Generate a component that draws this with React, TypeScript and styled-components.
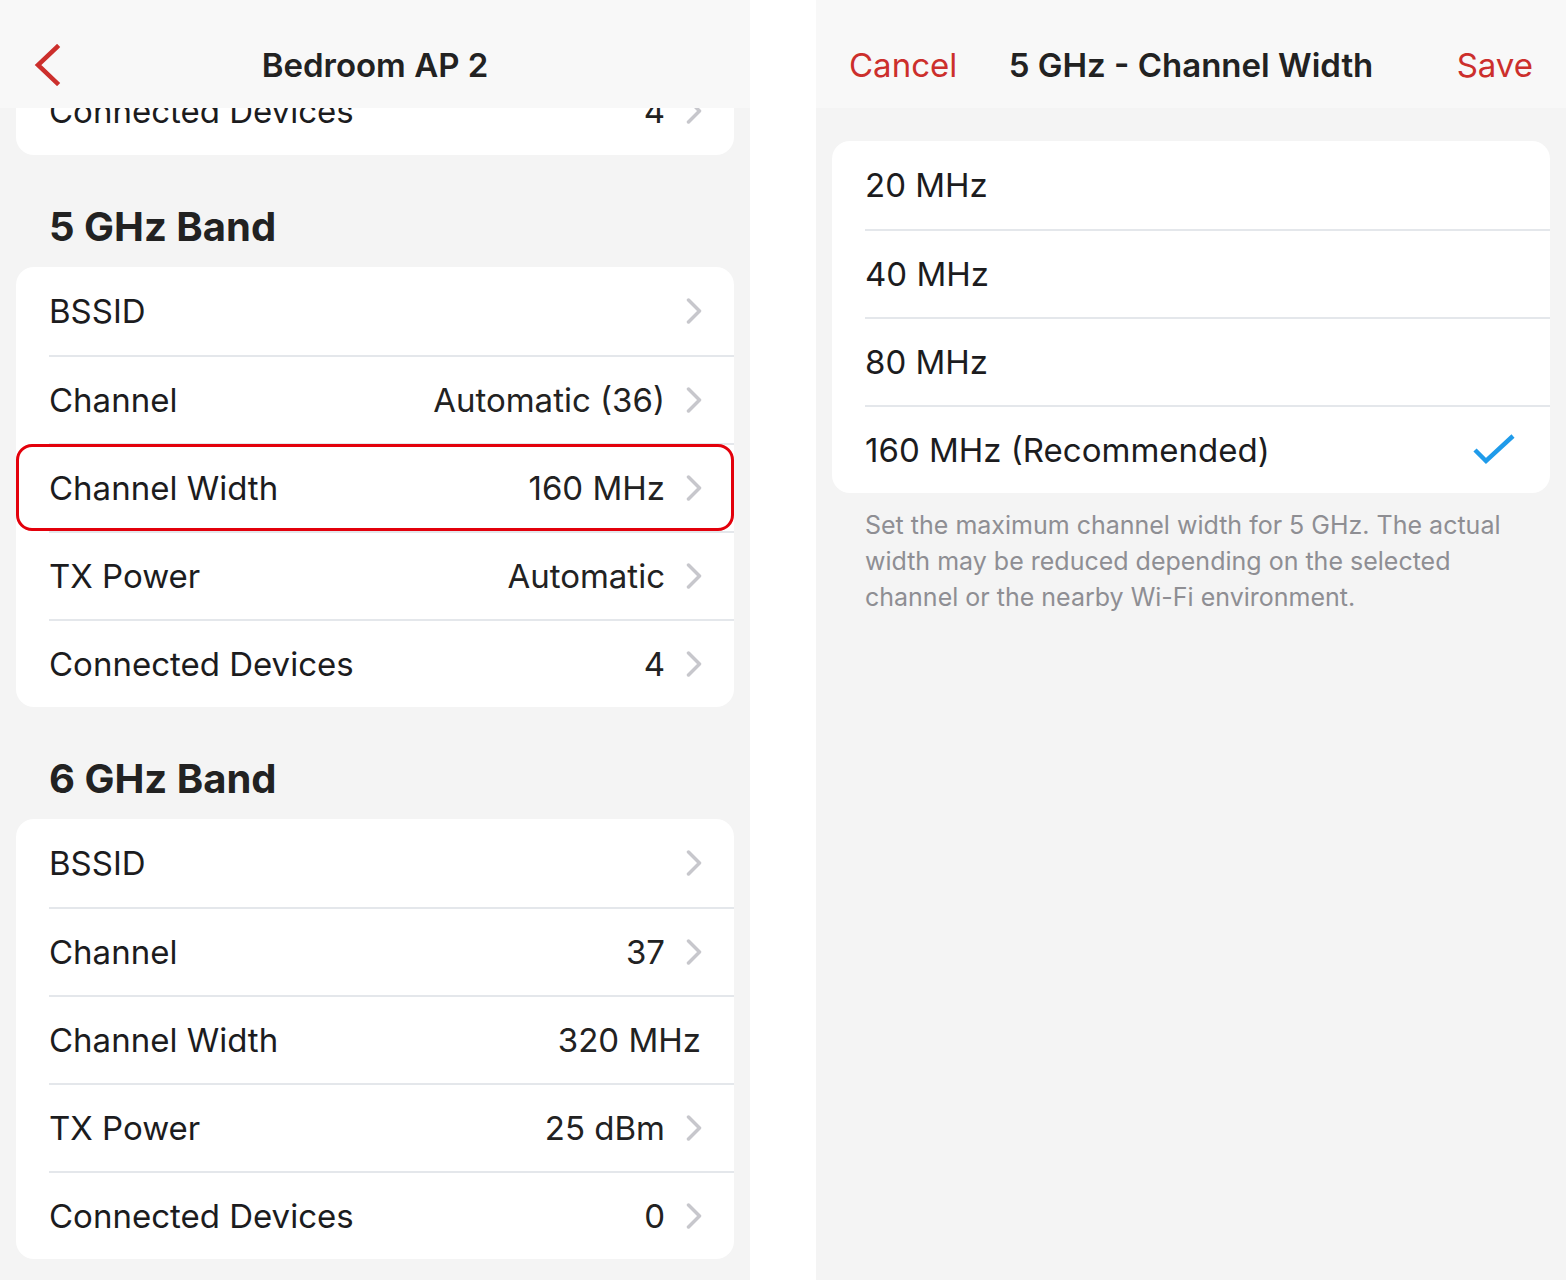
import React from 'react';
import styled, { createGlobalStyle, css } from 'styled-components';

// 类型定义
interface SettingRow {
  label: string;
  value?: string;
  chevron?: boolean;
  highlighted?: boolean;
}

const GlobalStyle = createGlobalStyle`
  html, body {
    margin: 0;
    padding: 0;
    background: #ffffff;
  }
  body {
    font-family: Inter, "Noto Sans", "Liberation Sans", sans-serif;
    color: #1c1c1e;
    -webkit-font-smoothing: antialiased;
  }
`;

const Screen = styled.div`
  display: grid;
  grid-template-columns: 750px 66px 750px;
  height: 1280px;
  background: #ffffff;
`;

const Panel = styled.div`
  display: flex;
  flex-direction: column;
  background: #f4f4f4;
  overflow: hidden;
`;

const NavBar = styled.header`
  flex: 0 0 108px;
  box-sizing: border-box;
  padding: 40px 33px 0;
  background: #f8f8f8;
  position: relative;
  z-index: 2;
`;

const NavInner = styled.div`
  display: grid;
  grid-template-columns: 1fr auto 1fr;
  align-items: center;
  height: 50px;
`;

const NavTitle = styled.h1`
  margin: 0;
  font-size: 33px;
  font-weight: 600;
  color: #222222;
  white-space: nowrap;
`;

const NavAction = styled.button<{ $align: 'left' | 'right' }>`
  justify-self: ${(p) => (p.$align === 'left' ? 'start' : 'end')};
  background: none;
  border: none;
  padding: 0;
  font: inherit;
  font-size: 33px;
  color: #cc2f2c;
  cursor: pointer;
  display: flex;
  align-items: center;
`;

const ScrollArea = styled.div`
  flex: 1;
  overflow: hidden;
  padding: 0 16px;
`;

const Card = styled.div<{ $clipped?: boolean }>`
  background: #ffffff;
  border-radius: 18px;
  overflow: visible;
  ${(p) =>
    p.$clipped &&
    css`
      margin-top: -41px;
    `}
`;

const SectionTitle = styled.h2`
  margin: 0;
  padding: 48px 33px 16px;
  font-size: 40px;
  line-height: 48px;
  font-weight: 700;
  color: #222222;
`;

const Row = styled.div<{ $highlighted?: boolean }>`
  display: flex;
  height: 88px;
  padding-left: 33px;
  border-radius: 16px;
  position: relative;
  ${(p) =>
    p.$highlighted &&
    css`
      &::after {
        content: '';
        position: absolute;
        inset: 1px 0 0 0;
        border: 3px solid #e3000b;
        border-radius: 16px;
        pointer-events: none;
      }
    `}
`;

const RowBody = styled.div<{ $first?: boolean; $pad: number }>`
  flex: 1;
  display: flex;
  align-items: center;
  padding-right: ${(p) => p.$pad}px;
  border-top: ${(p) => (p.$first ? 'none' : '2px solid #e4e7eb')};
`;

const Label = styled.span`
  flex: 1;
  font-size: 33px;
  color: #1c1c1e;
  white-space: nowrap;
`;

const Value = styled.span`
  font-size: 33px;
  color: #222222;
  white-space: nowrap;
`;

const ChevronWrap = styled.span`
  display: flex;
  margin-left: 21px;
`;

const Footer = styled.p`
  margin: 14px 0 0;
  padding: 0 40px 0 33px;
  font-size: 25px;
  line-height: 36px;
  color: #8e8e93;
`;

const RightBody = styled.div`
  flex: 1;
  padding: 33px 16px 0;
`;

const Chevron = () => (
  <ChevronWrap>
    <svg width="16" height="26" viewBox="0 0 16 26" fill="none">
      <path d="M2.5 2 L13.5 13 L2.5 24" stroke="#c7c7cc" strokeWidth="3.5" strokeLinecap="round" strokeLinejoin="round" />
    </svg>
  </ChevronWrap>
);

const BackArrow = () => (
  <svg width="28" height="42" viewBox="0 0 28 42" fill="none">
    <path d="M24 3 L5 21 L24 39" stroke="#cc2f2c" strokeWidth="4.5" strokeLinecap="square" strokeLinejoin="miter" />
  </svg>
);

const CheckMark = () => (
  <svg width="42" height="32" viewBox="0 0 42 32" fill="none">
    <path d="M2 16 L13 27 L40 2" stroke="#1f9bea" strokeWidth="4.5" />
  </svg>
);

const band5: SettingRow[] = [
  { label: 'BSSID', chevron: true },
  { label: 'Channel', value: 'Automatic (36)', chevron: true },
  { label: 'Channel Width', value: '160 MHz', chevron: true, highlighted: true },
  { label: 'TX Power', value: 'Automatic', chevron: true },
  { label: 'Connected Devices', value: '4', chevron: true },
];

const band6: SettingRow[] = [
  { label: 'BSSID', chevron: true },
  { label: 'Channel', value: '37', chevron: true },
  { label: 'Channel Width', value: '320 MHz' },
  { label: 'TX Power', value: '25 dBm', chevron: true },
  { label: 'Connected Devices', value: '0', chevron: true },
];

const widthOptions = ['20 MHz', '40 MHz', '80 MHz', '160 MHz (Recommended)'];

const SettingsCard: React.FC<{ rows: SettingRow[]; clipped?: boolean }> = ({ rows, clipped }) => (
  <Card $clipped={clipped}>
    {rows.map((row, i) => (
      <Row key={row.label} $highlighted={row.highlighted}>
        <RowBody $first={i === 0} $pad={row.chevron ? 32 : 33}>
          <Label>{row.label}</Label>
          {row.value && <Value>{row.value}</Value>}
          {row.chevron && <Chevron />}
        </RowBody>
      </Row>
    ))}
  </Card>
);

const App: React.FC = () => {
  const selected = widthOptions.length - 1;

  return (
    <>
      <GlobalStyle />
      <Screen>
        {/* 左侧：AP 详情 */}
        <Panel>
          <NavBar>
            <NavInner>
              <NavAction $align="left">
                <BackArrow />
              </NavAction>
              <NavTitle>Bedroom AP 2</NavTitle>
              <span />
            </NavInner>
          </NavBar>
          <ScrollArea>
            <SettingsCard clipped rows={[{ label: 'Connected Devices', value: '4', chevron: true }]} />
            <SectionTitle>5 GHz Band</SectionTitle>
            <SettingsCard rows={band5} />
            <SectionTitle>6 GHz Band</SectionTitle>
            <SettingsCard rows={band6} />
          </ScrollArea>
        </Panel>

        <div />

        {/* 右侧：信道宽度选择 */}
        <Panel>
          <NavBar>
            <NavInner>
              <NavAction $align="left">Cancel</NavAction>
              <NavTitle>5 GHz - Channel Width</NavTitle>
              <NavAction $align="right">Save</NavAction>
            </NavInner>
          </NavBar>
          <RightBody>
            <Card>
              {widthOptions.map((opt, i) => (
                <Row key={opt}>
                  <RowBody $first={i === 0} $pad={35}>
                    <Label>{opt}</Label>
                    {i === selected && <CheckMark />}
                  </RowBody>
                </Row>
              ))}
            </Card>
            <Footer>
              Set the maximum channel width for 5 GHz. The actual width may be reduced depending on the
              selected channel or the nearby Wi-Fi environment.
            </Footer>
          </RightBody>
        </Panel>
      </Screen>
    </>
  );
};

export default App;
